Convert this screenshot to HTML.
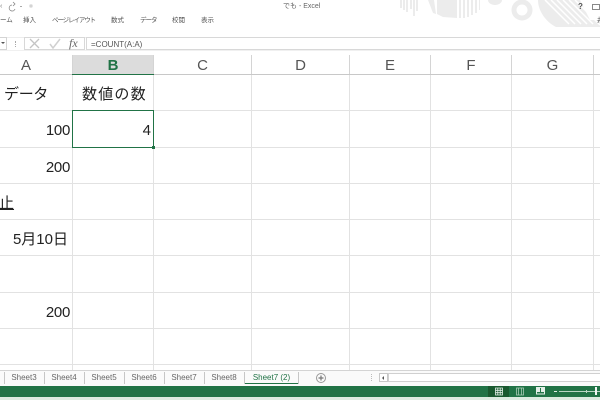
<!DOCTYPE html>
<html lang="ja"><head><meta charset="utf-8"><style>
html,body{margin:0;padding:0;background:#fff}
#p{position:relative;width:600px;height:400px;overflow:hidden;background:#fff;font-family:"Liberation Sans","Noto Sans CJK JP",sans-serif;color:#222;filter:blur(.3px)}
#p div{position:absolute;box-sizing:border-box;white-space:nowrap}
.h{left:0;width:600px;height:1px;background:#e2e2e2}
.v{top:75px;width:1px;height:295px;background:#e2e2e2}
.hv{top:55px;width:1px;height:19px;background:#d4d4d4}
.ch{top:55px;font-size:15px;line-height:21px;color:#555;text-align:center;height:21px}
.rb{top:15px;font-size:6.5px;line-height:12px;color:#555}
.c{font-size:15px;line-height:20px;color:#222}
.r{text-align:right}
.t{top:372px;font-size:8px;line-height:12px;color:#666;text-align:center;height:12px}
.ts{top:372px;width:1px;height:12px;background:#c6c6c6}
</style></head><body><div id="p">
<svg style="position:absolute;left:0;top:0" width="600" height="30" viewBox="0 0 600 30">
<g fill="#ececec">
<rect x="400" y="0" width="2" height="8"/><rect x="403" y="0" width="2" height="10"/><rect x="406" y="0" width="2" height="12"/><rect x="410" y="0" width="2" height="9"/><rect x="413" y="0" width="2" height="16"/><rect x="416" y="0" width="2" height="11"/>
<path d="M428 0h6l2 14-3-1z"/>
<path d="M437 0h20v18l-14-1-6-3z"/>
<path d="M459 0h2v18h-2zM463 0h2v18h-2zM467 0h2v17h-2zM471 0h2v15h-2zM475 0h2v13h-2zM479 0h1v10h-1z"/>
<path d="M488 0h14a7 5 0 0 1-14 0z"/>
<path d="M538 0h62v27H556c-10-5-18-16-18-27z"/>
</g>
<circle cx="522" cy="10" r="8" fill="none" stroke="#ececec" stroke-width="5"/>
<g stroke="#fff" stroke-width="1.5" fill="none"><path d="M545 0l24 24M551 0l24 24M557 0l24 24M563 0l24 24M569 0l24 24M575 0l25 25"/></g>
<path d="M580 0h20v20H590z" fill="#fff"/>
</svg>
<div style="left:0;top:2px;font-size:7px;line-height:10px;color:#777">‹</div>
<svg style="position:absolute;left:0;top:0" width="36" height="12" viewBox="0 0 36 12"><path d="M12 5a3 3 0 1 0 3 4" fill="none" stroke="#888" stroke-width=".8"/><path d="M13 2l2 2-2 2" fill="none" stroke="#888" stroke-width=".8"/><rect x="20" y="6" width="2" height="1" fill="#aaa"/><rect x="30" y="5" width="2" height="2" fill="none" stroke="#aaa" stroke-width=".6"/></svg>
<div style="left:283px;top:2px;font-size:7px;line-height:10px;color:#666">でも - Excel</div>
<div style="left:578px;top:2px;font-size:8px;line-height:10px;color:#555;font-weight:bold">?</div>
<div style="left:592px;top:4px;width:8px;height:6px;border:1px solid #888"></div>
<div class="rb" style="left:0">ーム</div>
<div class="rb" style="left:23px">挿入</div>
<div class="rb" style="left:52px;letter-spacing:-1.1px">ページレイアウト</div>
<div class="rb" style="left:111px">数式</div>
<div class="rb" style="left:140px;letter-spacing:-1px">データ</div>
<div class="rb" style="left:172px">校閲</div>
<div class="rb" style="left:201px">表示</div>
<div class="rb" style="left:597px">井</div>
<div style="left:0;top:37px;width:600px;height:1px;background:#ececec"></div>
<div style="left:-6px;top:37px;width:13px;height:13px;border:1px solid #d4d4d4"></div>
<div style="left:1px;top:42px;width:0;height:0;border-left:2px solid transparent;border-right:2px solid transparent;border-top:2px solid #555"></div>
<div style="left:15px;top:41px;width:1px;height:6px;border-left:1px dotted #aaa"></div>
<div style="left:24px;top:37px;width:61px;height:13px;border:1px solid #d8d8d8"></div>
<div style="left:86px;top:37px;width:514px;height:13px;border:1px solid #d8d8d8;border-right:0"></div>
<svg style="position:absolute;left:28px;top:38px" width="56" height="12" viewBox="0 0 56 12"><path d="M2 1l9 9M11 1l-9 9" stroke="#c4c4c4" stroke-width="1.3" fill="none"/><path d="M22 6l3 4 7-9" stroke="#d0d0d0" stroke-width="1.5" fill="none"/></svg>
<div style="left:69px;top:35px;font:italic 12px/16px 'Liberation Serif',serif;color:#666">fx</div>
<div style="left:91px;top:39px;font-size:8px;line-height:11px;color:#555">=COUNT(A:A)</div>
<div style="left:0;top:50px;width:600px;height:1px;background:#f0f0f0"></div>
<div style="left:72px;top:55px;width:82px;height:20px;background:#dcdcdc"></div>
<div class="h" style="top:74px;background:#c8c8c8"></div>
<div style="left:72px;top:74px;width:82px;height:1px;background:#217346"></div>
<div class="ch" style="left:0;width:52px">A</div>
<div class="ch" style="left:72px;width:82px;color:#217346;font-weight:bold">B</div>
<div class="ch" style="left:154px;width:97px">C</div>
<div class="ch" style="left:252px;width:97px">D</div>
<div class="ch" style="left:350px;width:80px">E</div>
<div class="ch" style="left:431px;width:80px">F</div>
<div class="ch" style="left:512px;width:81px">G</div>
<div class="hv" style="left:72px"></div><div class="hv" style="left:153px"></div><div class="hv" style="left:251px"></div><div class="hv" style="left:349px"></div><div class="hv" style="left:430px"></div><div class="hv" style="left:511px"></div><div class="hv" style="left:593px"></div>
<div class="h" style="top:110px"></div><div class="h" style="top:147px"></div><div class="h" style="top:183px"></div><div class="h" style="top:219px"></div><div class="h" style="top:255px"></div><div class="h" style="top:292px"></div><div class="h" style="top:328px"></div><div class="h" style="top:364px"></div>
<div class="v" style="left:72px"></div><div class="v" style="left:153px"></div><div class="v" style="left:251px"></div><div class="v" style="left:349px"></div><div class="v" style="left:430px"></div><div class="v" style="left:511px"></div><div class="v" style="left:593px"></div>
<div style="left:0;top:370px;width:600px;height:1px;background:#d4d4d4"></div>
<div style="left:0;top:371px;width:600px;height:15px;background:#fafafa"></div>
<div class="c" style="left:4px;top:85px;letter-spacing:-.3px">データ</div>
<div class="c" style="left:82px;top:85px;letter-spacing:1.2px">数値の数</div>
<div class="c r" style="left:0;width:70px;top:121px;letter-spacing:-.3px">100</div>
<div style="left:72px;top:110px;width:82px;height:38px;border:1px solid #217346"></div>
<div style="left:152px;top:146px;width:3px;height:3px;background:#217346"></div>
<div class="c r" style="left:72px;width:79px;top:121px">4</div>
<div class="c r" style="left:0;width:70px;top:158px;letter-spacing:-.3px">200</div>
<div class="c" style="left:-1px;top:194px;text-decoration:underline">止</div>
<div class="c r" style="left:0;width:68px;top:230px">5月10日</div>
<div class="c r" style="left:0;width:70px;top:303px;letter-spacing:-.3px">200</div>
<div class="ts" style="left:4px"></div><div class="ts" style="left:44px"></div><div class="ts" style="left:84px"></div><div class="ts" style="left:124px"></div><div class="ts" style="left:164px"></div><div class="ts" style="left:204px"></div><div class="ts" style="left:244px"></div><div class="ts" style="left:298px"></div>
<div class="t" style="left:4px;width:40px">Sheet3</div>
<div class="t" style="left:44px;width:40px">Sheet4</div>
<div class="t" style="left:84px;width:40px">Sheet5</div>
<div class="t" style="left:124px;width:40px">Sheet6</div>
<div class="t" style="left:164px;width:40px">Sheet7</div>
<div class="t" style="left:204px;width:40px">Sheet8</div>
<div class="t" style="left:245px;width:53px;color:#217346">Sheet7 (2)</div>
<div style="left:245px;top:383px;width:53px;height:1px;background:#217346"></div>
<svg style="position:absolute;left:315px;top:372px" width="12" height="12" viewBox="0 0 12 12"><circle cx="6" cy="6" r="4.5" fill="none" stroke="#999"/><path d="M3.5 6h5M6 3.5v5" stroke="#777" stroke-width="1.2"/></svg>
<div style="left:371px;top:374px;height:7px;border-left:1px dotted #bbb;width:1px"></div>
<div style="left:379px;top:373px;width:9px;height:9px;border:1px solid #c8c8c8;background:#fff"></div>
<div style="left:382px;top:376px;width:0;height:0;border-top:2px solid transparent;border-bottom:2px solid transparent;border-right:2px solid #555"></div>
<div style="left:388px;top:373px;width:212px;height:9px;border:1px solid #d0d0d0;border-right:0;background:#fff"></div>
<div style="left:0;top:386px;width:600px;height:11px;background:#217346"></div>
<div style="left:0;top:397px;width:600px;height:3px;background:#dcebe0"></div>
<div style="left:488px;top:386px;width:21px;height:11px;background:#19592f"></div>
<svg style="position:absolute;left:490px;top:386px" width="110" height="12" viewBox="0 0 110 12">
<g fill="none" stroke="#e4efe8" stroke-width=".8"><path d="M5.500 2h7v7h-7zM7.800 2v7M10.200 2v7M5.500 4.300h7M5.500 6.700h7"/></g>
<g fill="none" stroke="#a9cbb6" stroke-width=".8"><rect x="26.500" y="2" width="7" height="7"/><path d="M28.500 2v7M31.500 2v7"/></g>
<rect x="46.500" y="1.500" width="8" height="6.500" fill="none" stroke="#e4efe8"/><rect x="47" y="2" width="3" height="4" fill="#e4efe8"/><rect x="51" y="2" width="3" height="4" fill="#e4efe8"/>
<rect x="64" y="5" width="3" height="1" fill="#e4efe8"/>
<rect x="69" y="5" width="41" height="1" fill="#b9d6c4"/>
<rect x="96" y="4" width="1" height="3" fill="#b9d6c4"/>
<rect x="105" y="1" width="2" height="8" fill="#f2f7f4"/>
</svg>
</div></body></html>
